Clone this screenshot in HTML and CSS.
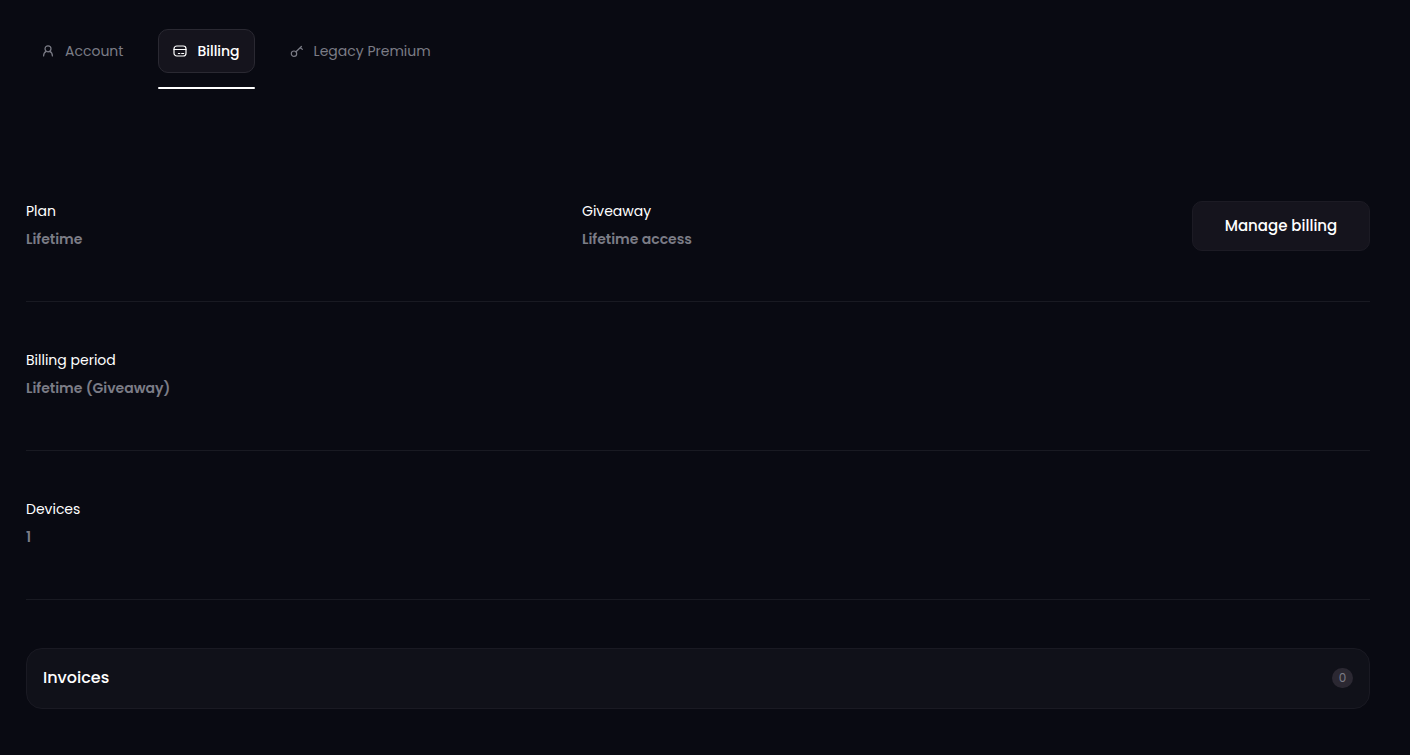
FILE: index.html
```html
<!DOCTYPE html>
<html lang="en">
<head>
	<meta charset="utf-8">
	<meta name="viewport" content="width=device-width, initial-scale=1">
	<title>Billing</title>
	<link rel="stylesheet" href="styles.css">
</head>
<body>
<nav class="tabs">
	<a class="tab" href="#account">
		<svg class="icon" viewBox="0 0 14 14" aria-hidden="true">
			<circle cx="7" cy="4.8" r="3"/>
			<path d="M5.2 7.4C3.6 8.2 2.6 9.6 2.6 12M8.8 7.4c1.6.8 2.6 2.2 2.6 4.6"/>
		</svg>
		Account
	</a>
	<a class="tab active" href="#billing">
		<svg class="icon" viewBox="0 0 14 14" aria-hidden="true">
			<rect x="1" y="2" width="12" height="10" rx="2.8"/>
			<path d="M1 5.5h12M5.4 9.5h1.4M8.7 9.5h2"/>
		</svg>
		Billing
	</a>
	<a class="tab" href="#legacy">
		<svg class="icon" viewBox="0 0 14 14" aria-hidden="true">
			<circle cx="4" cy="9.7" r="2.7"/>
			<path d="M6 7.8l5.4-5.3M10.2 3.7l2.1 1.6"/>
		</svg>
		Legacy Premium
	</a>
</nav>

<main class="billing">
	<section class="row">
		<div class="item">
			<h2 class="label">Plan</h2>
			<p class="value">Lifetime</p>
		</div>
		<div class="item">
			<h2 class="label">Giveaway</h2>
			<p class="value">Lifetime access</p>
		</div>
		<button class="manage" type="button">Manage billing</button>
	</section>
	<section class="row">
		<div class="item">
			<h2 class="label">Billing period</h2>
			<p class="value">Lifetime (Giveaway)</p>
		</div>
	</section>
	<section class="row">
		<div class="item">
			<h2 class="label">Devices</h2>
			<p class="value">1</p>
		</div>
	</section>
	<button class="invoices" type="button">
		<span>Invoices</span>
		<span class="count">0</span>
	</button>
</main>
</body>
</html>
```
FILE: styles.css
```css
*{
	box-sizing: border-box;
}
body{
	margin: 0;
	padding: 29px 40px 40px 26px;
	background: #090a12;
	color: #fff;
	font-family: Poppins, Inter, sans-serif;
	font-size: 14px;
	line-height: 20px;
}
button{
	font-family: inherit;
	color: inherit;
	cursor: pointer;
}

/* tabs */
.tabs{
	display: flex;
	gap: 20px;
}
.tab{
	position: relative;
	display: flex;
	align-items: center;
	gap: 10px;
	height: 44px;
	padding: 0 14px;
	border: 1px solid transparent;
	border-radius: 10px;
	color: #7b7c86;
	text-decoration: none;
}
.tab.active{
	background: #15141d;
	border-color: #2a2932;
	color: #fff;
	font-weight: 500;
}
/* line under the current tab */
.tab.active::after{
	content: "";
	position: absolute;
	left: -1px;
	right: -1px;
	bottom: -17px;
	height: 2px;
	border-radius: 1px;
	background: #fff;
}
.icon{
	width: 14px;
	height: 14px;
	fill: none;
	stroke: currentColor;
	stroke-width: 1.2;
	stroke-linecap: round;
	stroke-linejoin: round;
}

/* plan details */
.billing{
	padding-top: 80px;
}
.row{
	display: grid;
	grid-template-columns: 1fr 1fr 232px;
	padding: 48px 0 50px;
	border-bottom: 1px solid #191a22;
}
.item{
	min-height: 50px;
}
.label,
.value{
	margin: 0;
	font-size: 14px;
}
.label{
	margin-bottom: 8px;
	font-weight: 400;
}
.value{
	color: #7b7c86;
	font-weight: 600;
}
.manage{
	justify-self: end;
	width: 178px;
	height: 50px;
	padding: 0 16px 2px;
	border: 1px solid #1c1b24;
	border-radius: 10px;
	background: #15141d;
	font-size: 15px;
	font-weight: 500;
}

/* invoices */
.invoices{
	display: flex;
	align-items: center;
	justify-content: space-between;
	width: 100%;
	height: 61px;
	margin-top: 48px;
	padding: 0 16px 2px;
	border: 1px solid #1a1a23;
	border-radius: 16px;
	background: #101119;
	font-size: 16px;
	font-weight: 500;
}
.count{
	min-width: 21px;
	border-radius: 10px;
	background: #2b2832;
	color: #7b7c86;
	font-size: 12px;
	font-weight: 400;
	line-height: 20px;
	text-align: center;
}
```
